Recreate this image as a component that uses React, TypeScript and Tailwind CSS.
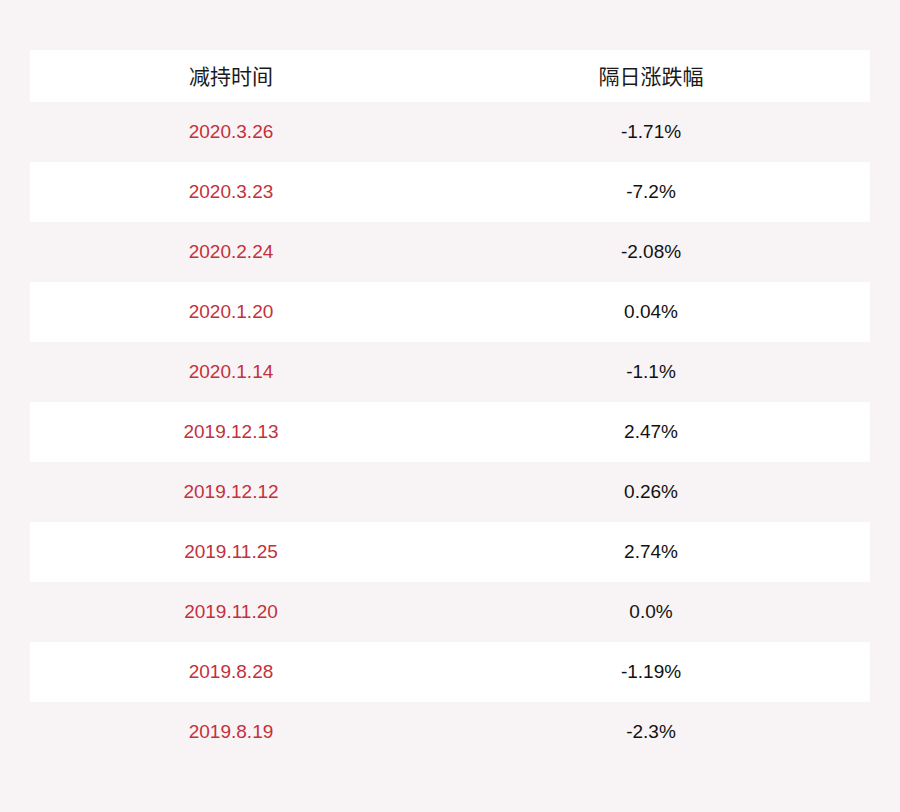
const rows: [string, string][] = [
  ['2020.3.26', '-1.71%'],
  ['2020.3.23', '-7.2%'],
  ['2020.2.24', '-2.08%'],
  ['2020.1.20', '0.04%'],
  ['2020.1.14', '-1.1%'],
  ['2019.12.13', '2.47%'],
  ['2019.12.12', '0.26%'],
  ['2019.11.25', '2.74%'],
  ['2019.11.20', '0.0%'],
  ['2019.8.28', '-1.19%'],
  ['2019.8.19', '-2.3%'],
]

export default function App() {
  return (
    <div
      className="w-[900px] h-[812px] bg-[#f8f4f5] px-[30px] pt-[50px]"
      style={{ fontFamily: '"Liberation Sans", "Noto Sans CJK SC", sans-serif' }}
    >
      <div
        className="grid grid-cols-[402px_438px] h-[52px] bg-white items-center text-[21px] text-[#1a1a1a]"
        style={{ fontFamily: '"Noto Sans CJK SC", sans-serif' }}
      >
        <div className="text-center">减持时间</div>
        <div className="text-center">隔日涨跌幅</div>
      </div>
      {rows.map(([date, pct], i) => (
        <div
          key={date}
          className={`grid grid-cols-[402px_438px] h-[60px] items-center text-[19px] ${
            i % 2 === 0 ? 'bg-[#f8f4f5]' : 'bg-white'
          }`}
        >
          <div className="text-center text-[#c4303c]">{date}</div>
          <div className="text-center text-[#111]">{pct}</div>
        </div>
      ))}
    </div>
  )
}
